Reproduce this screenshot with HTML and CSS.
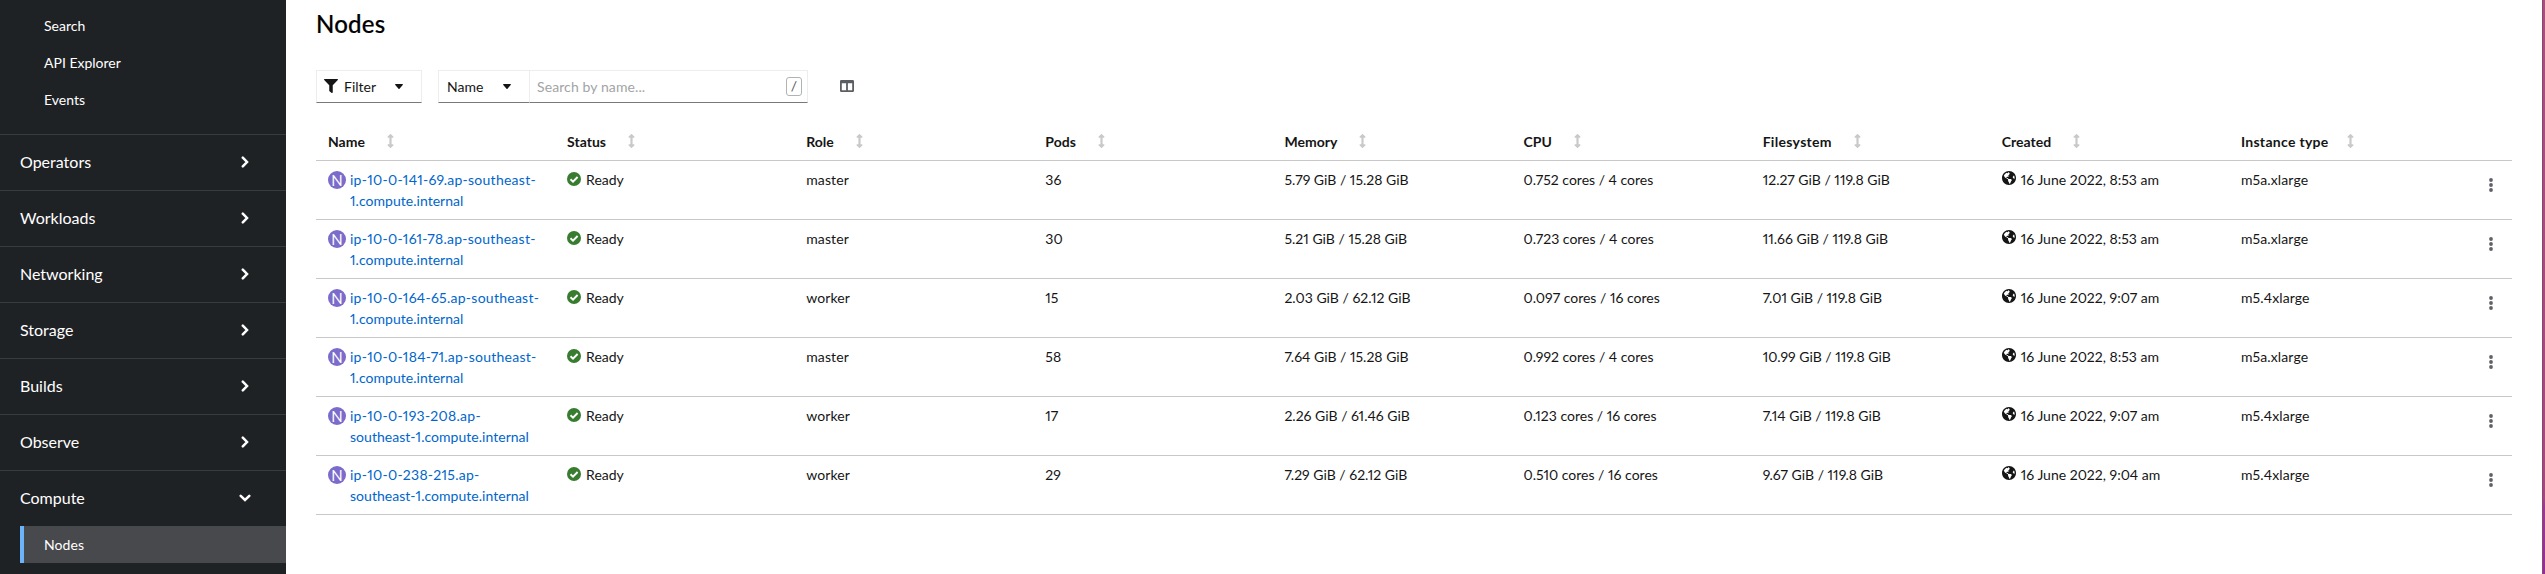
FILE: index.html
```html
<!DOCTYPE html>
<html lang="en">
<head>
<meta charset="utf-8">
<title>Nodes</title>
<link rel="stylesheet" href="styles.css">
</head>
<body>
<svg class="defs" width="0" height="0">
  <symbol id="right" viewBox="0 0 8 12"><path d="M1.8 1.7 6 6 1.8 10.3" fill="none" stroke="currentColor" stroke-width="2.5" stroke-linecap="round"/></symbol>
  <symbol id="down" viewBox="0 0 12 8"><path d="M1.7 1.8 6 6l4.300-4.200" fill="none" stroke="currentColor" stroke-width="2.500" stroke-linecap="round"/></symbol>
  <symbol id="sort" viewBox="0 0 256 512"><path fill="currentColor" d="M214.059 377.941H168V134.059h46.059c21.382 0 32.090-25.851 16.971-40.971L144.971 7.029c-9.373-9.373-24.568-9.373-33.941 0L24.971 93.088c-15.119 15.119-4.411 40.971 16.971 40.971H88v243.882H41.941c-21.382 0-32.090 25.851-16.971 40.971l86.059 86.059c9.373 9.373 24.568 9.373 33.941 0l86.059-86.059c15.120-15.119 4.412-40.971-16.970-40.971z"/></symbol>
  <symbol id="check" viewBox="0 0 14 14"><circle cx="7" cy="7" r="7" fill="#387c30"/><path d="M3.500 7.300 6 9.700l4.600-4.700" fill="none" stroke="#fff" stroke-width="1.900"/></symbol>
  <symbol id="globe" viewBox="0 8 496 496"><path fill="currentColor" d="M248 8C111.030 8 0 119.030 0 256s111.030 248 248 248 248-111.030 248-248S384.970 8 248 8zm82.290 357.600c-3.900 3.880-7.990 7.950-11.310 11.280-2.990 3-5.100 6.700-6.170 10.710-1.510 5.660-2.730 11.380-4.770 16.870l-17.390 46.850c-13.760 3-28 4.690-42.650 4.690v-27.380c1.690-12.620-7.640-36.260-22.630-51.250-6-6-9.370-14.140-9.370-22.630v-32.010c0-11.640-6.270-22.340-16.460-27.970-14.370-7.950-34.810-19.060-48.810-26.110-11.480-5.780-22.100-13.140-31.650-21.750l-.8-.72a114.792 114.792 0 0 1-18.060-20.740c-9.380-13.770-24.660-36.420-34.590-51.140 20.470-45.500 57.360-82.040 103.200-101.890l24.010 12.010C203.480 89.740 216 82.010 216 70.110v-11.300c7.990-1.290 16.120-2.110 24.390-2.420l28.300 28.300c6.250 6.250 6.250 16.380 0 22.630L264 112l-10.340 10.340c-3.120 3.120-3.120 8.190 0 11.310l4.690 4.690c3.120 3.120 3.120 8.190 0 11.310l-8 8a8.008 8.008 0 0 1-5.660 2.340h-8.990c-2.080 0-4.080.81-5.580 2.270l-9.920 9.650a8.008 8.008 0 0 0-1.580 9.310l15.590 31.190c2.660 5.320-1.210 11.580-7.150 11.580h-5.640c-1.930 0-3.790-.7-5.240-1.960l-9.280-8.060a16.017 16.017 0 0 0-15.550-3.100l-31.170 10.390a11.950 11.950 0 0 0-8.170 11.340c0 4.530 2.560 8.660 6.610 10.690l11.080 5.540c9.410 4.710 19.790 7.160 30.310 7.160s22.590 27.290 32 32h66.750c8.490 0 16.620 3.370 22.630 9.370l13.690 13.690a30.503 30.503 0 0 1 8.930 21.570 46.536 46.536 0 0 1-13.720 32.980zM417 274.250c-5.790-1.450-10.840-5-14.150-9.970l-17.980-26.970a23.970 23.970 0 0 1 0-26.620l19.590-29.380c2.320-3.470 5.500-6.290 9.240-8.150l12.980-6.490C440.200 193.590 448 223.870 448 256c0 8.670-.74 17.160-1.820 25.540L417 274.250z"/></symbol>
  <symbol id="kebab" viewBox="0 0 4 14"><g fill="currentColor"><circle cx="2" cy="2" r="1.900"/><circle cx="2" cy="7" r="1.900"/><circle cx="2" cy="12" r="1.900"/></g></symbol>
  <symbol id="caret" viewBox="0 0 8 5"><path fill="currentColor" d="M.6 0h6.800q.9.100.3.900L4.500 4.700q-.5.500-1 0L.3.900Q-.3.100.6 0z"/></symbol>
</svg>
<div class="console">
  <nav class="sidebar">
    <div class="sub first">
      <a class="sublink">Search</a>
      <a class="sublink">API Explorer</a>
      <a class="sublink">Events</a>
    </div>
    <a class="section">Operators<svg class="chev"><use href="#right"/></svg></a>
    <a class="section">Workloads<svg class="chev"><use href="#right"/></svg></a>
    <a class="section">Networking<svg class="chev"><use href="#right"/></svg></a>
    <a class="section">Storage<svg class="chev"><use href="#right"/></svg></a>
    <a class="section">Builds<svg class="chev"><use href="#right"/></svg></a>
    <a class="section">Observe<svg class="chev"><use href="#right"/></svg></a>
    <a class="section">Compute<svg class="chev open"><use href="#down"/></svg></a>
    <div class="sub"><a class="sublink active">Nodes</a></div>
  </nav>
  <main class="main">
    <h1 class="title">Nodes</h1>
    <div class="toolbar">
      <button class="filter"><svg class="funnel" viewBox="0 0 512 512"><path fill="currentColor" d="M487.976 0H24.028C2.710 0-8.047 25.866 7.058 40.971L192 225.941V432c0 7.831 3.821 15.170 10.237 19.662l80 55.980C298.020 518.690 320 507.493 320 487.980V225.941l184.947-184.970C520.021 25.896 509.338 0 487.976 0z"/></svg><span class="filterlabel">Filter</span><svg class="caret"><use href="#caret"/></svg></button>
      <div class="search">
        <button class="attr">Name<svg class="caret"><use href="#caret"/></svg></button>
        <div class="field"><span class="hint">Search by name...</span><kbd class="slash">/</kbd></div>
      </div>
      <svg class="columns" viewBox="0 0 14 12"><path fill="currentColor" fill-rule="evenodd" d="M1.300 0h11.400Q14 0 14 1.300v9.400q0 1.300-1.300 1.300H1.300Q0 12 0 10.700V1.300Q0 0 1.300 0zM1.800 3.300v6.900h4.300V3.300zM7.900 3.300v6.900h4.300V3.300z"/></svg>
    </div>
    <div class="table">
      <div class="row head">
        <div class="th">Name<svg class="sort"><use href="#sort"/></svg></div>
        <div class="th">Status<svg class="sort"><use href="#sort"/></svg></div>
        <div class="th">Role<svg class="sort"><use href="#sort"/></svg></div>
        <div class="th">Pods<svg class="sort"><use href="#sort"/></svg></div>
        <div class="th">Memory<svg class="sort"><use href="#sort"/></svg></div>
        <div class="th">CPU<svg class="sort"><use href="#sort"/></svg></div>
        <div class="th wide">Filesystem<svg class="sort"><use href="#sort"/></svg></div>
        <div class="th">Created<svg class="sort"><use href="#sort"/></svg></div>
        <div class="th wide">Instance type<svg class="sort near"><use href="#sort"/></svg></div>
      </div>
      <div class="row">
        <div class="td node"><span class="badge">N</span><a class="link">ip-10-0-141-69.ap-southeast-<br>1.compute.internal</a></div>
        <div class="td"><svg class="icon"><use href="#check"/></svg>Ready</div><div class="td role">master</div><div class="td">36</div>
        <div class="td">5.79 GiB / 15.28 GiB</div><div class="td">0.752 cores / 4 cores</div><div class="td">12.27 GiB / 119.8 GiB</div>
        <div class="td"><svg class="icon globe"><use href="#globe"/></svg>16 June 2022, 8:53 am</div><div class="td type">m5a.xlarge</div><div class="menu"><svg class="kebab"><use href="#kebab"/></svg></div>
      </div>
      <div class="row">
        <div class="td node"><span class="badge">N</span><a class="link">ip-10-0-161-78.ap-southeast-<br>1.compute.internal</a></div>
        <div class="td"><svg class="icon"><use href="#check"/></svg>Ready</div><div class="td role">master</div><div class="td">30</div>
        <div class="td">5.21 GiB / 15.28 GiB</div><div class="td">0.723 cores / 4 cores</div><div class="td">11.66 GiB / 119.8 GiB</div>
        <div class="td"><svg class="icon globe"><use href="#globe"/></svg>16 June 2022, 8:53 am</div><div class="td type">m5a.xlarge</div><div class="menu"><svg class="kebab"><use href="#kebab"/></svg></div>
      </div>
      <div class="row">
        <div class="td node"><span class="badge">N</span><a class="link">ip-10-0-164-65.ap-southeast-<br>1.compute.internal</a></div>
        <div class="td"><svg class="icon"><use href="#check"/></svg>Ready</div><div class="td role">worker</div><div class="td">15</div>
        <div class="td">2.03 GiB / 62.12 GiB</div><div class="td">0.097 cores / 16 cores</div><div class="td">7.01 GiB / 119.8 GiB</div>
        <div class="td"><svg class="icon globe"><use href="#globe"/></svg>16 June 2022, 9:07 am</div><div class="td type">m5.4xlarge</div><div class="menu"><svg class="kebab"><use href="#kebab"/></svg></div>
      </div>
      <div class="row">
        <div class="td node"><span class="badge">N</span><a class="link">ip-10-0-184-71.ap-southeast-<br>1.compute.internal</a></div>
        <div class="td"><svg class="icon"><use href="#check"/></svg>Ready</div><div class="td role">master</div><div class="td">58</div>
        <div class="td">7.64 GiB / 15.28 GiB</div><div class="td">0.992 cores / 4 cores</div><div class="td">10.99 GiB / 119.8 GiB</div>
        <div class="td"><svg class="icon globe"><use href="#globe"/></svg>16 June 2022, 8:53 am</div><div class="td type">m5a.xlarge</div><div class="menu"><svg class="kebab"><use href="#kebab"/></svg></div>
      </div>
      <div class="row">
        <div class="td node"><span class="badge">N</span><a class="link">ip-10-0-193-208.ap-<br>southeast-1.compute.internal</a></div>
        <div class="td"><svg class="icon"><use href="#check"/></svg>Ready</div><div class="td role">worker</div><div class="td">17</div>
        <div class="td">2.26 GiB / 61.46 GiB</div><div class="td">0.123 cores / 16 cores</div><div class="td">7.14 GiB / 119.8 GiB</div>
        <div class="td"><svg class="icon globe"><use href="#globe"/></svg>16 June 2022, 9:07 am</div><div class="td type">m5.4xlarge</div><div class="menu"><svg class="kebab"><use href="#kebab"/></svg></div>
      </div>
      <div class="row">
        <div class="td node"><span class="badge">N</span><a class="link">ip-10-0-238-215.ap-<br>southeast-1.compute.internal</a></div>
        <div class="td"><svg class="icon"><use href="#check"/></svg>Ready</div><div class="td role">worker</div><div class="td">29</div>
        <div class="td">7.29 GiB / 62.12 GiB</div><div class="td">0.510 cores / 16 cores</div><div class="td">9.67 GiB / 119.8 GiB</div>
        <div class="td"><svg class="icon globe"><use href="#globe"/></svg>16 June 2022, 9:04 am</div><div class="td type">m5.4xlarge</div><div class="menu"><svg class="kebab"><use href="#kebab"/></svg></div>
      </div>
    </div>
  </main>
  <div class="edge"></div>
</div>
</body>
</html>
```

FILE: styles.css
```css
* { box-sizing: border-box; }
body { margin: 0; background: #fff; color: #151515; font: 14px/21px Lato, "Open Sans", sans-serif; font-variant-numeric: proportional-nums; font-variant-ligatures: none; }
.defs { display: none; }
.console { display: flex; height: 574px; overflow: hidden; }
.sidebar { width: 286px; flex: none; background: #1f2225; color: #fff; }
.sub { padding-left: 20px; }
.first { padding-top: 7px; padding-bottom: 16px; }
.sublink { display: block; height: 37px; padding: 8px 0 8px 24px; }
.active { background: #48494c; border-left: 4px solid #6cb4f7; padding-left: 20px; letter-spacing: .1px; }
.section { display: flex; align-items: center; justify-content: space-between; height: 56px; padding: 0 36px 2px 20px; border-top: 1px solid #393c3f; font-size: 16px; }
.chev { width: 8px; height: 12px; margin-right: 1px; }
.open { width: 12px; height: 8px; margin-right: -1px; }
.main { flex: 1; padding: 8px 30px 0; }
.title { margin: 0 0 31px; font-size: 24px; line-height: 31px; font-weight: 500; letter-spacing: .2px; color: #000; -webkit-text-stroke: .2px #000; }
.toolbar { display: flex; align-items: center; height: 33px; }
button { font: inherit; color: inherit; background: none; padding: 0; }
.filter, .attr, .field { display: flex; align-items: center; height: 33px; border: 1px solid #ededed; border-bottom-color: #77797c; }
.filter { width: 106px; padding: 0 18px 0 7px; }
.funnel { width: 14px; height: 14px; margin-top: -2px; }
.filterlabel { margin: 0 auto 0 6px; }
.caret { width: 8px; height: 5px; }
.search { display: flex; width: 370px; margin-left: 16px; }
.attr { width: 91px; justify-content: space-between; padding: 0 18px 0 8px; border-right: 0; }
.field { flex: 1; justify-content: space-between; padding: 0 5px 0 7px; color: #a2a4a6; }
.hint { letter-spacing: .1px; }
.slash { width: 16px; height: 19px; border: 1px solid #b0b2b4; border-radius: 3px; font: 14px/16px Lato, sans-serif; text-align: center; color: #55585c; }
.columns { width: 14px; height: 12px; margin: 0 0 1px 32px; color: #5b5f64; }
.table { margin-top: 20px; }
.row { display: grid; grid-template-columns: repeat(9, 1fr) 44px; height: 59px; padding-top: 8px; border-bottom: 1px solid #c8c8c8; }
.head { height: 38px; font-weight: 700; }
.th, .td { padding-left: 12px; white-space: nowrap; }
.th { display: flex; }
.wide { letter-spacing: .3px; }
.sort { width: 7px; height: 14px; margin: 3px 0 0 22px; color: #c9c9c9; }
.near { margin-left: 18px; }
.node { display: flex; }
.badge { width: 18px; height: 18px; margin: 2px 4px 0 0; border-radius: 50%; background: #7b6ccb; color: #fff; font-size: 15px; line-height: 18px; text-align: center; }
.link { color: #06c; letter-spacing: .03px; }
.link::first-line { letter-spacing: .26px; }
.icon { width: 14px; height: 14px; margin: 0 5px -1px 0; }
.globe { vertical-align: 1px; }
.role { letter-spacing: .1px; }
.type { letter-spacing: .12px; }
.menu { padding: 9px 0 0 21px; }
.kebab { display: block; width: 4px; height: 14px; color: #5f6166; }
.edge { width: 3px; flex: none; background: linear-gradient(#a8507c 0, #a44a7c 450px, #a0487e 498px, #963a94 506px, #932c98 574px); border-left: 1px solid #8c4470; }
```
